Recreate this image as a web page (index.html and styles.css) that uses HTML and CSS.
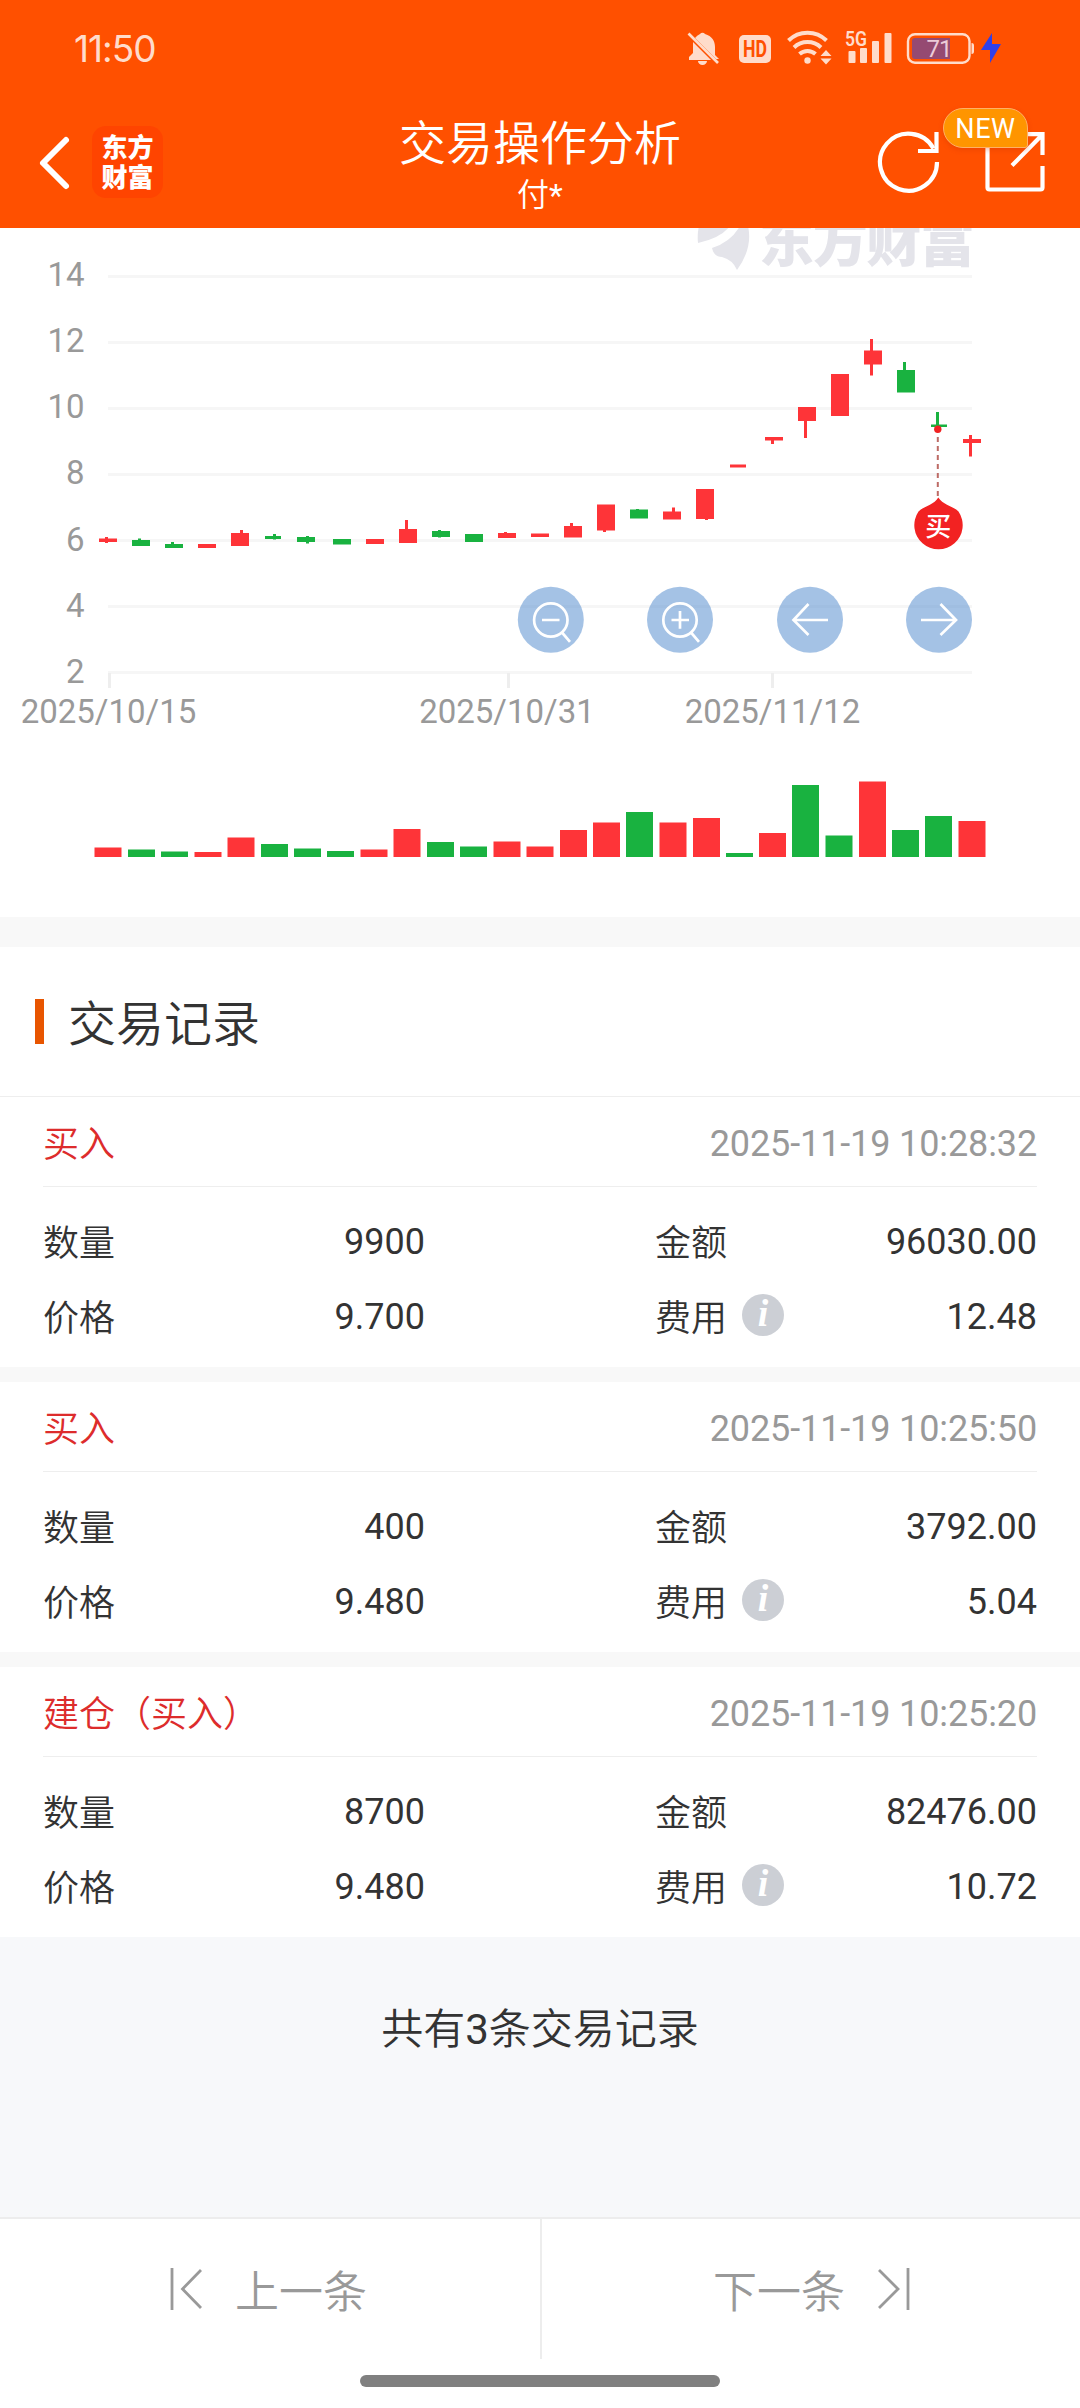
FILE: index.html
```html
<!DOCTYPE html>
<html lang="zh-CN">
<head>
<meta charset="utf-8">
<title>交易操作分析</title>
<link rel="stylesheet" href="styles.css">
</head>
<body>
<div class="app">
  <header class="header">
    <div class="status">
      <span class="status-time">11:50</span>
      <svg class="status-icons" width="322" height="40" viewBox="684 28 322 40">
        <g fill="#ffdccb">
          <path d="M695 38a12 12 0 0 1 5-4a3 3 0 0 1 5 0c7 2 10 7 10 13v8l4 4h-3l-22-22zM693 42l18 18h-22v-3l4-4z"/>
          <path d="M698 61h9a4.500 4 0 0 1-9 0z"/>
          <path d="M688.500 33.500L718 63" stroke="#ffdccb" stroke-width="2.600"/>
          <rect x="739" y="35" width="32" height="28" rx="5"/>
          <circle cx="807.500" cy="60.500" r="3.200"/>
          <path d="M820.500 56l5.500-6 5.500 6zM820.500 58.500h11l-5.500 6z"/>
          <rect x="848.500" y="51" width="7" height="12" rx="1"/>
          <rect x="860" y="48" width="7" height="15" rx="1"/>
          <rect x="872" y="41" width="7" height="22" rx="1"/>
          <rect x="884.500" y="33" width="7" height="30" rx="1"/>
          <path d="M971.500 43c2 0 2.500 1 2.500 3v5c0 2-.5 3-2.500 3z"/>
        </g>
        <g fill="none" stroke="#ffdccb" stroke-width="4">
          <path d="M788.500 40.500a27 27 0 0 1 38 0M794 47.500a19.500 19.500 0 0 1 27 0M799.500 54a12 12 0 0 1 16 0"/>
          <rect x="908" y="34.200" width="61.500" height="28.500" rx="7" stroke-width="2.400"/>
        </g>
        <path d="M915 38h35v21h-35a3 3 0 0 1-3-3V41a3 3 0 0 1 3-3z" fill="#954a72"/>
        <text class="hd" x="755" y="57" textLength="24" lengthAdjust="spacingAndGlyphs">HD</text>
        <text class="net" x="845" y="46" textLength="22" lengthAdjust="spacingAndGlyphs">5G</text>
        <text class="batt" x="939" y="57">71</text>
        <path d="M992 33l-11 17h9v13l11-19h-9z" fill="#3040ea"/>
      </svg>
    </div>
    <div class="navbar">
      <div class="nav-left">
        <svg class="back" width="36" height="60" viewBox="36 133 36 60" fill="none" stroke="#fff" stroke-width="6" stroke-linecap="round" stroke-linejoin="round"><path d="M66 140L43 163L66 186"/></svg>
        <div class="logo"><span>东方</span><span>财富</span></div>
      </div>
      <div class="nav-title"><h1>交易操作分析</h1><p>付*</p></div>
      <div class="nav-right">
        <svg width="172" height="66" viewBox="876 129 172 66" fill="none" stroke="#fff" stroke-width="4.200">
          <path d="M937 162a28.500 28.500 0 1 1-3.500-13.500"/>
          <path d="M936.500 132v19H918"/>
          <path d="M987.500 145v42.500q0 2 2 2h51q2 0 2-2V166M1024 134.200h18.500V155M1012 165.500L1042 135"/>
        </svg>
        <span class="badge">NEW</span>
      </div>
    </div>
  </header>

  <section class="chart">
    <svg width="1080" height="689" viewBox="0 228 1080 689">
      <g fill="#e4e4ea">
        <path d="M698 243Q697 234 699 226H730Q721 238 698 243z"/>
        <path d="M712 248Q731 242 740 226H748Q753 248 737 270Q733 260 722 257Q714 257 712 248z"/>
      </g>
      <text class="watermark" x="759" y="261" textLength="216">东方财富</text>
      <path d="M108 276.500H972M108 342.500H972M108 408.500H972M108 474.500H972M108 540.500H972M108 606.500H972M108 672.500H972" stroke="#f6f6f6" stroke-width="3"/>
      <path d="M109.500 673V688M508.500 673V688M772.500 673V688" stroke="#eee" stroke-width="3"/>
      <g class="axis-y">
        <text x="84.500" y="286">14</text><text x="84.500" y="352">12</text><text x="84.500" y="418">10</text><text x="84.500" y="484">8</text><text x="84.500" y="550.500">6</text><text x="84.500" y="616.500">4</text><text x="84.500" y="682.500">2</text>
      </g>
      <g class="axis-x">
        <text x="108.500" y="723">2025/10/15</text><text x="507" y="723">2025/10/31</text><text x="772.500" y="723">2025/11/12</text>
      </g>
      <path class="up" d="M99 538.500h18v3.500h-18zM105 537h3v6h-3zM198 544h18v4h-18zM231 533h18v13h-18zM240 530h3v4h-3zM366 539h18v5h-18zM399 529h18v14h-18zM405 520h3v10h-3zM498 533h18v5h-18zM504 532h3v2h-3zM531 533.500h18v3.500h-18zM564 526h18v11.500h-18zM570 523h3v4h-3zM597 504.500h18v26h-18zM603 530h3v2h-3zM663 511.500h18v8h-18zM672 507.500h3v5h-3zM696 489h18v30h-18zM705 518h3v2h-3zM730 464.500h16v3h-16zM765 437h18v3.500h-18zM771 440h3v4h-3zM798 407h18v14h-18zM804 420h3v18h-3zM831 374h18v42h-18zM864 350.500h18v14h-18zM870 339h3v36.500h-3zM963 439h18v4h-18zM969 435h3v21.500h-3z"/>
      <path class="down" d="M132 540h18v6h-18zM138 538.500h3v3h-3zM165 544h18v4h-18zM171 542h3v3h-3zM265 536h16v3h-16zM273 534h3v5.500h-3zM297 537h18v5h-18zM306 536h3v7.500h-3zM333 539h18v5.500h-18zM432 531h18v6h-18zM438 530h3v7.500h-3zM465 534h18v8h-18zM630 509.500h18v9h-18zM636 509h3v2h-3zM897 370h18v22.500h-18zM903 362h3v9h-3zM931 424.500h16v2.500h-16zM936 412h3v15h-3z"/>
      <path class="up" d="M94.500 847.500h27V857h-27zM194.500 852h27v5h-27zM227.500 837.500h27V857h-27zM360.500 849.500h27v7.500h-27zM393.500 829h27v28h-27zM493.500 841.500h27V857h-27zM526.500 846.500h27V857h-27zM560 830h27v27h-27zM593 822.500h27V857h-27zM659.500 822.500h27V857h-27zM693 818h27v39h-27zM759 833h27v24h-27zM859 781.500h27V857h-27zM958.500 821h27v36h-27z"/>
      <path class="down" d="M128 849.500h27v7.500h-27zM161 851.500h27v5.500h-27zM261 844h27v13h-27zM294 848.500h27v8.500h-27zM327 851h27v6h-27zM427 842h27v15h-27zM460 846.500h27V857h-27zM626 812h27v45h-27zM726 853h27v4h-27zM792 785h27v72h-27zM825.500 835.500h27V857h-27zM892 830h27v27h-27zM925 816h27v41h-27z"/>
      <path d="M937.800 437V498" stroke="#bd6b66" stroke-width="2" stroke-dasharray="5 4"/>
      <circle cx="937.800" cy="429.300" r="3.700" fill="#f02222"/>
      <path d="M938.300 497.500C943 505 953 506 958.500 511.500A24.200 24.200 0 1 1 918.500 511.500C924 506 934 505 938.300 497.500z" fill="#f22222"/>
      <text class="pin" x="938.300" y="536">买</text>
      <g fill="rgba(73,133,203,.5)"><circle cx="550.800" cy="619.700" r="33"/><circle cx="680" cy="619.700" r="33"/><circle cx="810" cy="619.700" r="33"/><circle cx="939" cy="619.700" r="33"/></g>
      <g fill="none" stroke="#fff" stroke-width="2.700">
        <circle cx="550.800" cy="620" r="16.700"/><path d="M542 620h17.500M562 632.500l8 9.300"/>
        <circle cx="680" cy="620" r="16.700"/><path d="M671.500 620H689M680 611v17.700M691 632.500l8 9.300"/>
        <path d="M828 620H793.500M808.500 604L793.500 620L808.500 635M921 620h35M940.500 604L956 620L940.500 635"/>
      </g>
    </svg>
  </section>

  <h2 class="section-title"><span>交易记录</span></h2>

  <main class="records">
    <article class="record">
      <div class="record-head"><span class="kind">买入</span><time>2025-11-19 10:28:32</time></div>
      <dl class="fields">
        <div class="field"><dt>数量</dt><dd>9900</dd></div>
        <div class="field"><dt>金额</dt><dd>96030.00</dd></div>
        <div class="field"><dt>价格</dt><dd>9.700</dd></div>
        <div class="field"><dt>费用<i class="info">i</i></dt><dd>12.48</dd></div>
      </dl>
    </article>
    <article class="record">
      <div class="record-head"><span class="kind">买入</span><time>2025-11-19 10:25:50</time></div>
      <dl class="fields">
        <div class="field"><dt>数量</dt><dd>400</dd></div>
        <div class="field"><dt>金额</dt><dd>3792.00</dd></div>
        <div class="field"><dt>价格</dt><dd>9.480</dd></div>
        <div class="field"><dt>费用<i class="info">i</i></dt><dd>5.04</dd></div>
      </dl>
    </article>
    <article class="record">
      <div class="record-head"><span class="kind">建仓（买入）</span><time>2025-11-19 10:25:20</time></div>
      <dl class="fields">
        <div class="field"><dt>数量</dt><dd>8700</dd></div>
        <div class="field"><dt>金额</dt><dd>82476.00</dd></div>
        <div class="field"><dt>价格</dt><dd>9.480</dd></div>
        <div class="field"><dt>费用<i class="info">i</i></dt><dd>10.72</dd></div>
      </dl>
    </article>
  </main>

  <p class="summary">共有3条交易记录</p>

  <footer class="pager">
    <div class="pager-row">
      <div class="pager-item prev">
        <svg width="32" height="44" viewBox="0 0 32 44" fill="none" stroke="#999" stroke-width="2.800"><path d="M2 1v42M31 3L12.500 22L31 41"/></svg>
        <span>上一条</span>
      </div>
      <div class="pager-item next">
        <span>下一条</span>
        <svg width="32" height="44" viewBox="0 0 32 44" fill="none" stroke="#999" stroke-width="2.800"><path d="M30 1v42M1 3L20 22L1 41"/></svg>
      </div>
    </div>
    <div class="home-bar"></div>
  </footer>
</div>
</body>
</html>
```
FILE: styles.css
```css
* { box-sizing: border-box; margin: 0; padding: 0; }
body { background: #fff; color: #333; font-family: Roboto, "Noto Sans CJK SC DemiLight", "Noto Sans CJK SC", sans-serif; font-weight: 400; }
svg { display: block; }
.app { width: 1080px; height: 2408px; display: flex; flex-direction: column; overflow: hidden; }

.header { height: 228px; background: #ff5000; color: #fff; flex: none; }
.status { height: 96px; display: flex; justify-content: space-between; padding: 0 74px 0 74px; align-items: center; }
.status-time { font-family: Inter, sans-serif; font-size: 37px; letter-spacing: -1px; color: #ffdccb; }
.status-icons text { font-family: Roboto, sans-serif; }
.hd { font-size: 23px; font-weight: 700; fill: #ff5000; text-anchor: middle; }
.net { font-size: 21px; font-weight: 600; fill: #ffdccb; }
.batt { font-size: 24px; fill: #eccbd8; text-anchor: middle; letter-spacing: -1px; }

.navbar { height: 132px; display: grid; grid-template-columns: 1fr 300px 1fr; }
.nav-left { display: flex; gap: 20px; padding: 30px 0 0 36px; }
.back { margin-top: 7px; }
.logo { width: 71px; height: 72px; padding-bottom: 2px; border-radius: 14px; background: #ff4400; display: flex; flex-direction: column; align-items: center; justify-content: center; font: 900 26px/30px "Noto Sans CJK SC", sans-serif; }
.nav-title { text-align: center; }
.nav-title h1 { font-size: 47px; line-height: 60px; font-weight: 400; margin: 18px 0 2px; white-space: nowrap; }
.nav-title p { font-size: 32px; line-height: 38px; }
.nav-right { position: relative; display: flex; justify-content: flex-end; padding: 33px 32px 0 0; }
.badge { position: absolute; right: 52px; top: 12px; width: 85px; height: 40px; border: 1px solid #ffb066; border-radius: 20px 20px 3px 20px; background: #ff9500; font-size: 27px; line-height: 41px; letter-spacing: .6px; text-align: center; box-shadow: 0 2px 5px rgba(200,50,0,.3); }

.chart { height: 719px; flex: none; border-bottom: 30px solid #f8f8f8; }
.chart text { font-family: Roboto, "Noto Sans CJK SC", sans-serif; }
.chart .watermark { font-size: 55px; font-weight: 900; fill: #e4e4ea; }
.axis-y { font-size: 33px; fill: #999; text-anchor: end; }
.axis-x { font-size: 33px; fill: #999; text-anchor: middle; }
.up { fill: #fe3438; }
.down { fill: #19b240; }
.pin { font-size: 26px; font-weight: 500; fill: #fff; text-anchor: middle; }

.section-title { height: 150px; flex: none; display: flex; align-items: center; gap: 24px; padding: 0 0 0 35px; border-bottom: 1px solid #eee; font-size: 48px; font-weight: 400; }
.section-title::before { content: ""; width: 9px; height: 45px; background: #e85500; }
.section-title span { padding-bottom: 3px; }

.records { display: flex; flex-direction: column; gap: 15px; background: #f8f8f8; }
.record { height: 270px; padding: 0 43px; background: #fff; font-size: 36px; }
.record-head { height: 90px; display: flex; justify-content: space-between; align-items: center; padding-top: 4px; border-bottom: 1px solid #eee; }
.kind { color: #dd2c2c; padding-bottom: 6px; }
.record-head time { color: #999; letter-spacing: -.12px; }
.fields { display: grid; grid-template-columns: 382px 382px; justify-content: space-between; grid-auto-rows: 75px; padding-top: 17px; }
.field { display: flex; justify-content: space-between; align-items: center; }
.field dt { display: flex; align-items: center; padding-bottom: 4px; }
.info { width: 42px; height: 42px; margin-left: 15px; border-radius: 50%; background: #cccfd5; color: #fff; font: italic 700 38px/39px "Liberation Serif", serif; text-align: center; }

.summary { flex: 1; background: #f7f8fa; padding-top: 62px; font-size: 42px; line-height: 62px; text-align: center; }

.pager { height: 191px; flex: none; border-top: 2px solid #ededed; }
.pager-row { height: 140px; display: grid; grid-template-columns: 542px 1fr; font-size: 44px; color: #999; }
.pager-item { display: flex; align-items: center; }
.prev { border-right: 2px solid #ededed; padding-left: 170px; gap: 33px; }
.next { padding-left: 171px; gap: 33px; }
.home-bar { width: 360px; height: 12px; margin: 16px auto 0; border-radius: 6px; background: #808080; }
```
